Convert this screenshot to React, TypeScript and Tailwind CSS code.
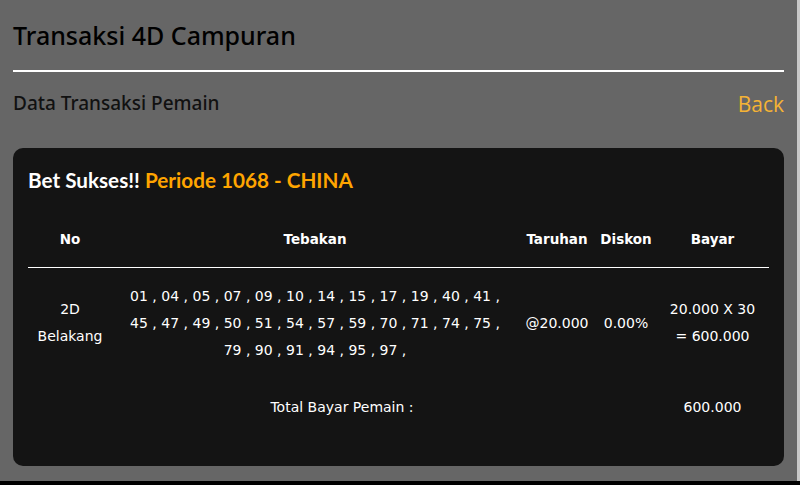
const numbers = [
  '01', '04', '05', '07', '09', '10', '14', '15', '17', '19', '40', '41',
  '45', '47', '49', '50', '51', '54', '57', '59', '70', '71', '74', '75',
  '79', '90', '91', '94', '95', '97',
]

const headFont = "font-['DejaVu_Sans',sans-serif] font-bold text-[13.5px]"

export default function App() {
  return (
    <div className="min-h-[485px] bg-black">
      <div className="flex h-[481px]">
        <div className="flex-1 bg-[#666666] px-[13px] pt-[18px] font-['Noto_Sans',sans-serif]">
          {/* Page heading */}
          <h1 className="text-[25px] font-medium leading-[34px] text-black">Transaksi 4D Campuran</h1>
          <div className="mt-[18px] h-[2px] bg-white" />

          <div className="mt-[18px] flex items-start justify-between">
            <h2 className="text-[19px] font-medium leading-[26px] text-[#111]">Data Transaksi Pemain</h2>
            <a href="#" className="mt-[1px] font-['Open_Sans',sans-serif] text-[21px] leading-[26px] text-[#f5b335]">
              Back
            </a>
          </div>

          {/* Result card */}
          <div className="mt-[31px] h-[318px] rounded-[10px] bg-[#141414] px-[15px] pt-[20px] font-['Lato',sans-serif]">
            <h3 className="text-[20.7px] font-bold leading-[24px]">
              <span className="text-white">Bet Sukses!! </span>
              <span className="text-[#ffa500]">Periode 1068 - CHINA</span>
            </h3>

            <table className="mt-[19px] w-full border-collapse text-white">
              <thead>
                <tr className={`${headFont} border-b border-white`}>
                  <th className="h-[56px] w-[84px]">No</th>
                  <th className="w-[406px]">Tebakan</th>
                  <th className="w-[78px]">Taruhan</th>
                  <th className="w-[60px]">Diskon</th>
                  <th>Bayar</th>
                </tr>
              </thead>
              <tbody className="font-['DejaVu_Sans',sans-serif] text-[14px] leading-[27px]">
                <tr className="text-center">
                  <td className="h-[112px]">
                    2D
                    <br />
                    Belakang
                  </td>
                  <td className="px-[14px]">
                    {numbers.map((n) => (
                      <span key={n}>{n} , </span>
                    ))}
                  </td>
                  <td>@20.000</td>
                  <td>0.00%</td>
                  <td>
                    20.000 X 30
                    <br />= 600.000
                  </td>
                </tr>
                <tr className="text-center">
                  <td colSpan={4} className="h-[56px]">
                    Total Bayar Pemain :
                  </td>
                  <td>600.000</td>
                </tr>
              </tbody>
            </table>
          </div>
        </div>
        <div className="w-[3px] bg-[#c8c8c8]" />
      </div>
    </div>
  )
}
